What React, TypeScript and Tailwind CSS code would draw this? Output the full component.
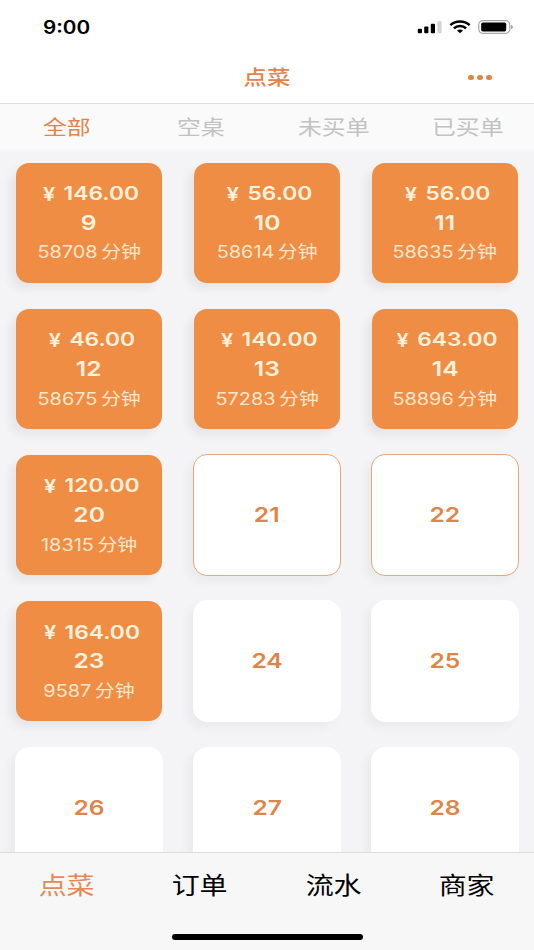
import clsx from "clsx"

type Table = {
  no: number
  amount?: string
  minutes?: number
  outlined?: boolean
}

const tabs = ["全部", "空桌", "未买单", "已买单"]
const navItems = ["点菜", "订单", "流水", "商家"]

const tables: Table[] = [
  { no: 9, amount: "146.00", minutes: 58708 },
  { no: 10, amount: "56.00", minutes: 58614 },
  { no: 11, amount: "56.00", minutes: 58635 },
  { no: 12, amount: "46.00", minutes: 58675 },
  { no: 13, amount: "140.00", minutes: 57283 },
  { no: 14, amount: "643.00", minutes: 58896 },
  { no: 20, amount: "120.00", minutes: 18315 },
  { no: 21, outlined: true },
  { no: 22, outlined: true },
  { no: 23, amount: "164.00", minutes: 9587 },
  { no: 24 },
  { no: 25 },
  { no: 26 },
  { no: 27 },
  { no: 28 },
]

function StatusBar() {
  return (
    <div className="flex h-[52px] shrink-0 items-center justify-between pl-[43px] pr-[20px] pt-[2px]">
      <span className="origin-left scale-x-[1.15] pt-[2px] text-[18px] font-semibold leading-none text-black">9:00</span>
      <div className="flex items-center">
        <svg width="25" height="14" viewBox="0 0 25 14">
          <rect x="0.8" y="8.8" width="4.2" height="4.4" rx="1" fill="#000" />
          <rect x="7.2" y="6.4" width="4.2" height="6.8" rx="1" fill="#000" />
          <rect x="13.8" y="3.8" width="4.2" height="9.4" rx="1" fill="#000" />
          <rect x="20.4" y="1.2" width="4.2" height="12" rx="1" fill="#d4d4d4" />
        </svg>
        <svg className="ml-[7px]" width="22" height="14" viewBox="0 0 22 14">
          <g fill="none" stroke="#000" strokeWidth="2.5">
            <path d="M1.4 5.2 C6.6 0.4 15.4 0.4 20.6 5.2" />
            <path d="M4.9 8.4 C8.2 5.3 13.8 5.3 17.1 8.4" />
          </g>
          <path d="M8 10.6 C9.6 9.1 12.4 9.1 14 10.6 L11 13.2 Z" fill="#000" />
        </svg>
        <svg className="ml-[7px]" width="36" height="14" viewBox="0 0 36 14">
          <rect x="0.8" y="0.7" width="31" height="12.6" rx="4" fill="none" stroke="#a8a8a8" strokeWidth="1.2" />
          <rect x="3.2" y="2.6" width="25" height="8.8" rx="1.6" fill="#000" />
          <path d="M33.2 5 C35.2 5.6 35.2 8.4 33.2 9 Z" fill="#888" />
        </svg>
      </div>
    </div>
  )
}

function TableCard({ table }: { table: Table }) {
  if (table.amount) {
    return (
      <div className="flex h-[120px] w-[146px] flex-col items-center rounded-[13px] bg-[#ef8d44] pt-[17px] text-[#fff1dc] shadow-[-6px_6px_10px_rgba(0,0,0,0.06)]">
        <div className="ml-[5px] flex h-[29px] scale-x-[1.2] items-center whitespace-nowrap text-[19px] font-semibold">
          <span className="mr-[7px] text-[18px]">¥</span>
          {table.amount}
        </div>
        <div className="flex h-[29px] scale-x-[1.2] items-center text-[20.5px] font-semibold">{table.no}</div>
        <div className="flex h-[31px] scale-x-[1.17] items-center whitespace-nowrap text-[17px] text-[#fde6cc]">
          {table.minutes}
          <span className="ml-[3px]">分钟</span>
        </div>
      </div>
    )
  }

  return (
    <div
      className={clsx(
        "flex h-[122px] w-[148px] items-center justify-center rounded-[14px] border bg-white pt-px shadow-[-6px_6px_10px_rgba(0,0,0,0.04)]",
        table.outlined ? "border-[#e5a77c]" : "border-white"
      )}
    >
      <span className="scale-x-[1.2] text-[20.5px] font-semibold text-[#e08549]">{table.no}</span>
    </div>
  )
}

export default function App() {
  return (
    <div className="flex h-[950px] w-[534px] flex-col overflow-hidden bg-white font-['Inter','Noto_Sans_CJK_SC',sans-serif]">
      <StatusBar />

      <header className="grid h-[52px] shrink-0 grid-cols-3 items-center border-b border-[#dfdfe1]">
        <h1 className="col-start-2 scale-x-[1.17] text-center text-[20px] font-medium leading-none text-[#e4834a]">点菜</h1>
        <button className="flex gap-[3px] justify-self-end pr-[42px]">
          <i className="h-[5px] w-[6px] rounded-full bg-[#df8645]" />
          <i className="h-[5px] w-[6px] rounded-full bg-[#df8645]" />
          <i className="h-[5px] w-[6px] rounded-full bg-[#df8645]" />
        </button>
      </header>

      <div className="grid h-[46px] shrink-0 grid-cols-4 items-center bg-[#fafafb] pt-px text-center text-[20px] leading-none">
        {tabs.map((tab, i) => (
          <span key={tab} className={clsx("scale-x-[1.19]", i === 0 ? "text-[#e4834a]" : "text-[#c2c2c2]")}>
            {tab}
          </span>
        ))}
      </div>

      <main className="min-h-0 flex-1 overflow-hidden bg-[#f4f4f6]">
        <div className="-mt-[0.6px] grid auto-rows-[146.25px] grid-cols-3 place-items-center">
          {tables.map((table) => (
            <TableCard key={table.no} table={table} />
          ))}
        </div>
      </main>

      <nav className="flex h-[98px] shrink-0 flex-col items-center border-t border-[#dcdcdc] bg-[#f7f7f7]">
        <div className="grid h-[66px] w-full grid-cols-4 items-center pr-px text-center text-[23.5px] leading-none">
          {navItems.map((item, i) => (
            <span key={item} className={clsx("scale-x-[1.19]", i === 0 ? "text-[#e58a55]" : "text-black")}>
              {item}
            </span>
          ))}
        </div>
        <div className="mt-[15px] h-[6px] w-[191px] rounded-full bg-black" />
      </nav>
    </div>
  )
}
